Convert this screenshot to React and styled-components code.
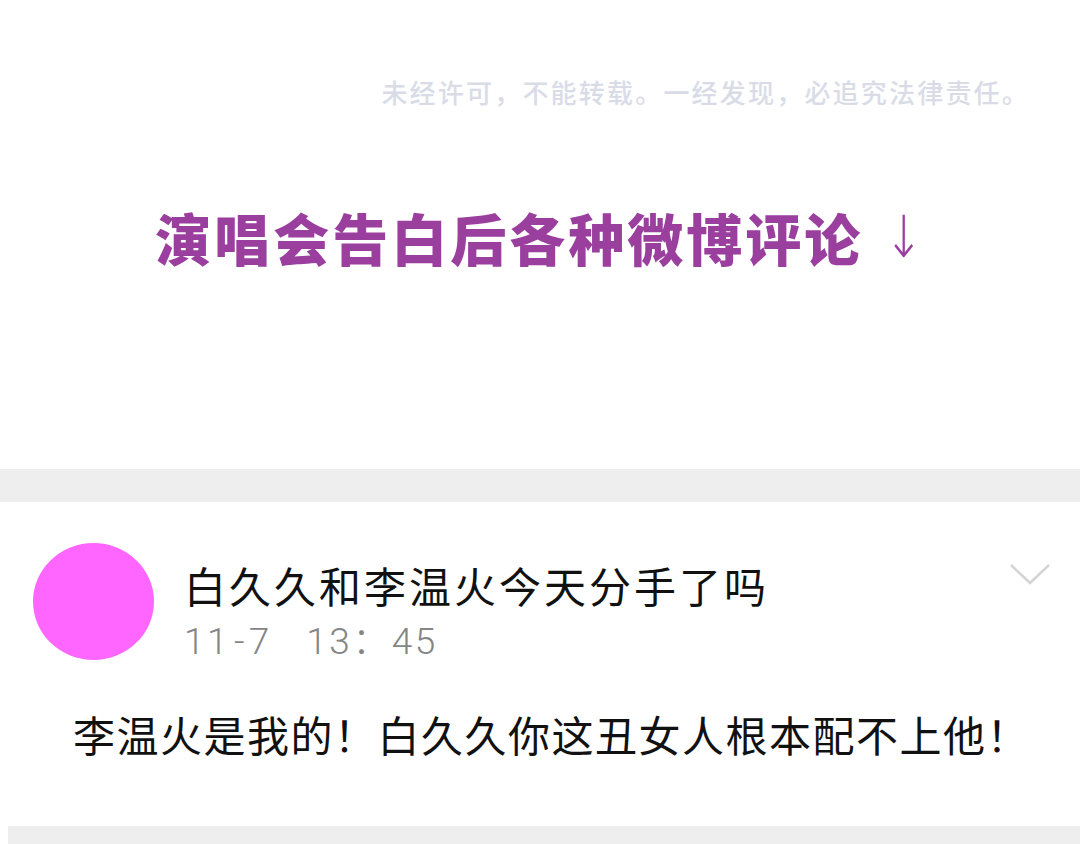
import styled, {createGlobalStyle} from 'styled-components';

const GlobalStyle = createGlobalStyle`
    body {
        margin: 0;
        background: #ffffff;
        font-family: "Noto Sans CJK SC", "Noto Sans", sans-serif;
    }
`;

const Page = styled.div`
    width: 1080px;
    height: 844px;
    overflow: hidden;
    display: flex;
    flex-direction: column;
    background: #ffffff;
`;

const Header = styled.section`
    height: 469px;
    display: flex;
    flex-direction: column;
`;

const Watermark = styled.div`
    align-self: flex-end;
    margin-top: 72px;
    margin-right: 50px;
    font-size: 26px;
    font-weight: 500;
    letter-spacing: 2.2px;
    color: #d9dce7;
    line-height: 40px;
    white-space: nowrap;
`;

const Title = styled.h1`
    margin: 90px 0 0 6px;
    display: flex;
    justify-content: center;
    align-items: center;
    font-size: 56px;
    font-weight: 900;
    letter-spacing: 3px;
    color: #9a3f9e;
    line-height: 70px;
`;

const Arrow = styled.span`
    margin-left: 16px;
    font-family: "DejaVu Sans", sans-serif;
    font-weight: 300;
    font-size: 58px;
    transform: scaleX(0.8);
`;

const Divider = styled.div`
    height: ${p => p.h}px;
    margin-left: ${p => p.indent || 0}px;
    background: #eeeeee;
    flex-shrink: 0;
`;

const Comment = styled.section`
    height: 324px;
    display: flex;
    flex-direction: column;
`;

const Head = styled.div`
    display: flex;
    align-items: flex-start;
    padding: 41px 28px 0 33px;
`;

const Avatar = styled.div`
    width: 121px;
    height: 117px;
    border-radius: 50%;
    background: #ff66ff;
    flex-shrink: 0;
`;

const Meta = styled.div`
    flex: 1;
    display: flex;
    flex-direction: column;
    padding-left: 30px;
    padding-top: 16px;
`;

const Name = styled.div`
    font-size: 42px;
    letter-spacing: 3px;
    color: #111111;
    line-height: 52px;
`;

const Time = styled.div`
    margin-top: 9px;
    font-family: "Roboto", "Noto Sans CJK SC", sans-serif;
    font-weight: 300;
    font-size: 37px;
    letter-spacing: 2.5px;
    color: #858585;
    line-height: 44px;
    white-space: pre;
`;

const Dash = styled.span`
    letter-spacing: 0;
    margin: 0 4px;
`;

const Chevron = styled.svg`
    margin-top: 18px;
    flex-shrink: 0;
`;

const Body = styled.p`
    margin: 42px 0 0 73px;
    font-size: 42px;
    letter-spacing: 1.5px;
    color: #111111;
    line-height: 56px;
`;

export default function App() {
    return (
        <Page>
            <GlobalStyle/>
            <Header>
                <Watermark>未经许可，不能转载。一经发现，必追究法律责任。</Watermark>
                <Title>演唱会告白后各种微博评论<Arrow>↓</Arrow></Title>
            </Header>
            <Divider h={33}/>
            <Comment>
                <Head>
                    <Avatar/>
                    <Meta>
                        <Name>白久久和李温火今天分手了吗</Name>
                        <Time>11<Dash>-</Dash>{'7   13：45'}</Time>
                    </Meta>
                    <Chevron width="44" height="26" viewBox="0 0 44 26">
                        <path d="M3 4 L22 22 L41 4" fill="none" stroke="#d4d4d4" strokeWidth="2.5"/>
                    </Chevron>
                </Head>
                <Body>李温火是我的！白久久你这丑女人根本配不上他！</Body>
            </Comment>
            <Divider h={18} indent={8}/>
        </Page>
    );
}
